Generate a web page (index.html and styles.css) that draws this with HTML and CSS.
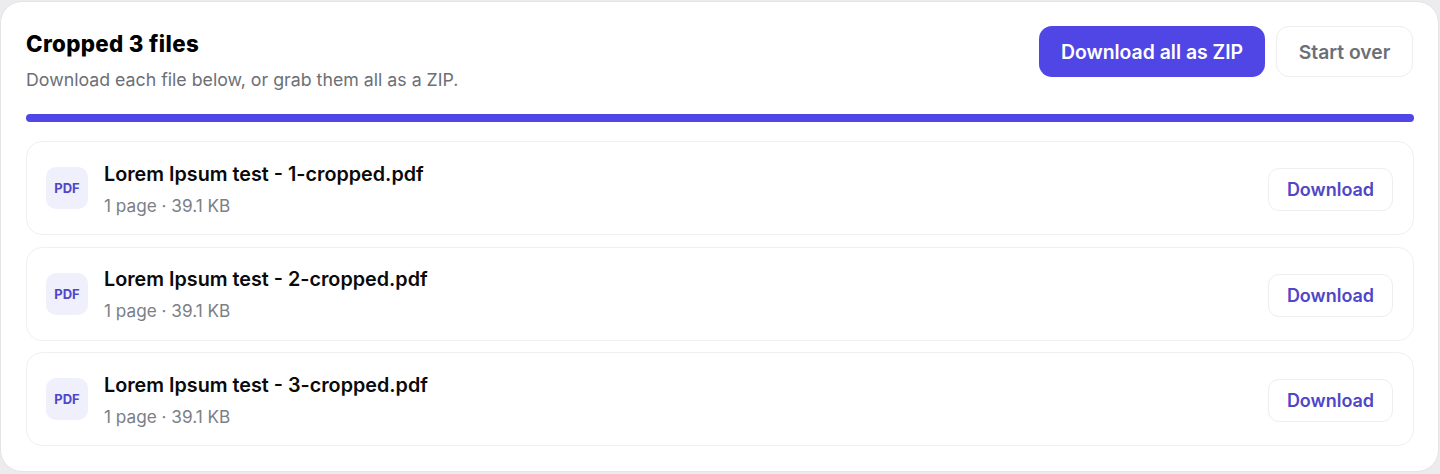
FILE: index.html
```html
<!DOCTYPE html>
<html lang="en">
<head>
    <meta charset="UTF-8">
    <meta name="viewport" content="width=device-width, initial-scale=1.0">
    <title>Cropped files</title>
    <link rel="stylesheet" href="styles.css">
</head>
<body>
    <main class="card">
        <header class="card-head">
            <div class="head-text">
                <h1>Cropped 3 files</h1>
                <p>Download each file below, or grab them all as a ZIP.</p>
            </div>
            <div class="head-actions">
                <button class="btn-primary">Download all as ZIP</button>
                <button class="btn-ghost">Start over</button>
            </div>
        </header>

        <div class="progress"></div>

        <ul class="file-list">
            <li class="file-row">
                <div class="file-badge">PDF</div>
                <div class="file-info">
                    <div class="file-name">Lorem Ipsum test - 1-cropped.pdf</div>
                    <div class="file-meta">1 page · 39.1 KB</div>
                </div>
                <button class="btn-download">Download</button>
            </li>
            <li class="file-row">
                <div class="file-badge">PDF</div>
                <div class="file-info">
                    <div class="file-name">Lorem Ipsum test - 2-cropped.pdf</div>
                    <div class="file-meta">1 page · 39.1 KB</div>
                </div>
                <button class="btn-download">Download</button>
            </li>
            <li class="file-row">
                <div class="file-badge">PDF</div>
                <div class="file-info">
                    <div class="file-name">Lorem Ipsum test - 3-cropped.pdf</div>
                    <div class="file-meta">1 page · 39.1 KB</div>
                </div>
                <button class="btn-download">Download</button>
            </li>
        </ul>
    </main>
</body>
</html>
```

FILE: styles.css
```css
* {
    margin: 0;
    padding: 0;
    box-sizing: border-box;
}

body {
    font-family: Inter, 'Liberation Sans', sans-serif;
    background-color: #ececee;
    width: 1440px;
    height: 474px;
    overflow: hidden;
    padding: 1px 1px 0 0;
}

.card {
    height: 471px;
    background-color: #fff;
    border: 1px solid #e4e4e6;
    border-radius: 22px;
    padding: 24px 24px 24px 25px;
}

.card-head {
    display: flex;
    justify-content: space-between;
    align-items: flex-start;
    height: 51px;
}

.head-text h1 {
    font-size: 22.3px;
    font-weight: 800;
    line-height: 36px;
    letter-spacing: 0.35px;
    color: #000;
}

.head-text p {
    font-size: 17.75px;
    line-height: 24px;
    margin-top: 6px;
    color: #6b7076;
}

.head-actions {
    display: flex;
    gap: 11px;
    padding-right: 1px;
}

button {
    font-family: inherit;
    cursor: pointer;
}

.btn-primary {
    width: 226px;
    height: 51px;
    border: none;
    border-radius: 13px;
    background-color: #4f46e5;
    color: #fff;
    font-size: 19.4px;
    font-weight: 600;
}

.btn-ghost {
    width: 137px;
    height: 51px;
    border: 1px solid #eeeef1;
    border-radius: 13px;
    background-color: #fff;
    color: #6b7076;
    font-size: 19.3px;
    font-weight: 600;
}

.progress {
    height: 8px;
    margin-top: 37px;
    border-radius: 4px;
    background-color: #4f46e5;
}

.file-list {
    list-style: none;
    display: flex;
    flex-direction: column;
    gap: 11.5px;
    margin-top: 19px;
}

.file-row {
    display: flex;
    align-items: center;
    height: 94px;
    padding: 1px 20px 0 19px;
    border: 1px solid #f0f0f2;
    border-radius: 16px;
}

.file-badge {
    width: 42px;
    height: 42px;
    flex-shrink: 0;
    display: flex;
    align-items: center;
    justify-content: center;
    margin-top: -1px;
    border-radius: 10px;
    background-color: #eff0fc;
    color: #4f46c8;
    font-size: 13px;
    font-weight: 700;
}

.file-info {
    flex: 1;
    margin-left: 16px;
}

.file-name {
    font-size: 19.75px;
    font-weight: 600;
    line-height: 26px;
    color: #0a0a0a;
}

.file-meta {
    font-size: 17.2px;
    line-height: 22px;
    margin-top: 8px;
    color: #7b8087;
}

.btn-download {
    width: 125px;
    height: 43px;
    margin-top: 2px;
    border: 1px solid #eeeef1;
    border-radius: 11px;
    background-color: #fff;
    color: #4f46c8;
    font-size: 18px;
    font-weight: 600;
}
```
